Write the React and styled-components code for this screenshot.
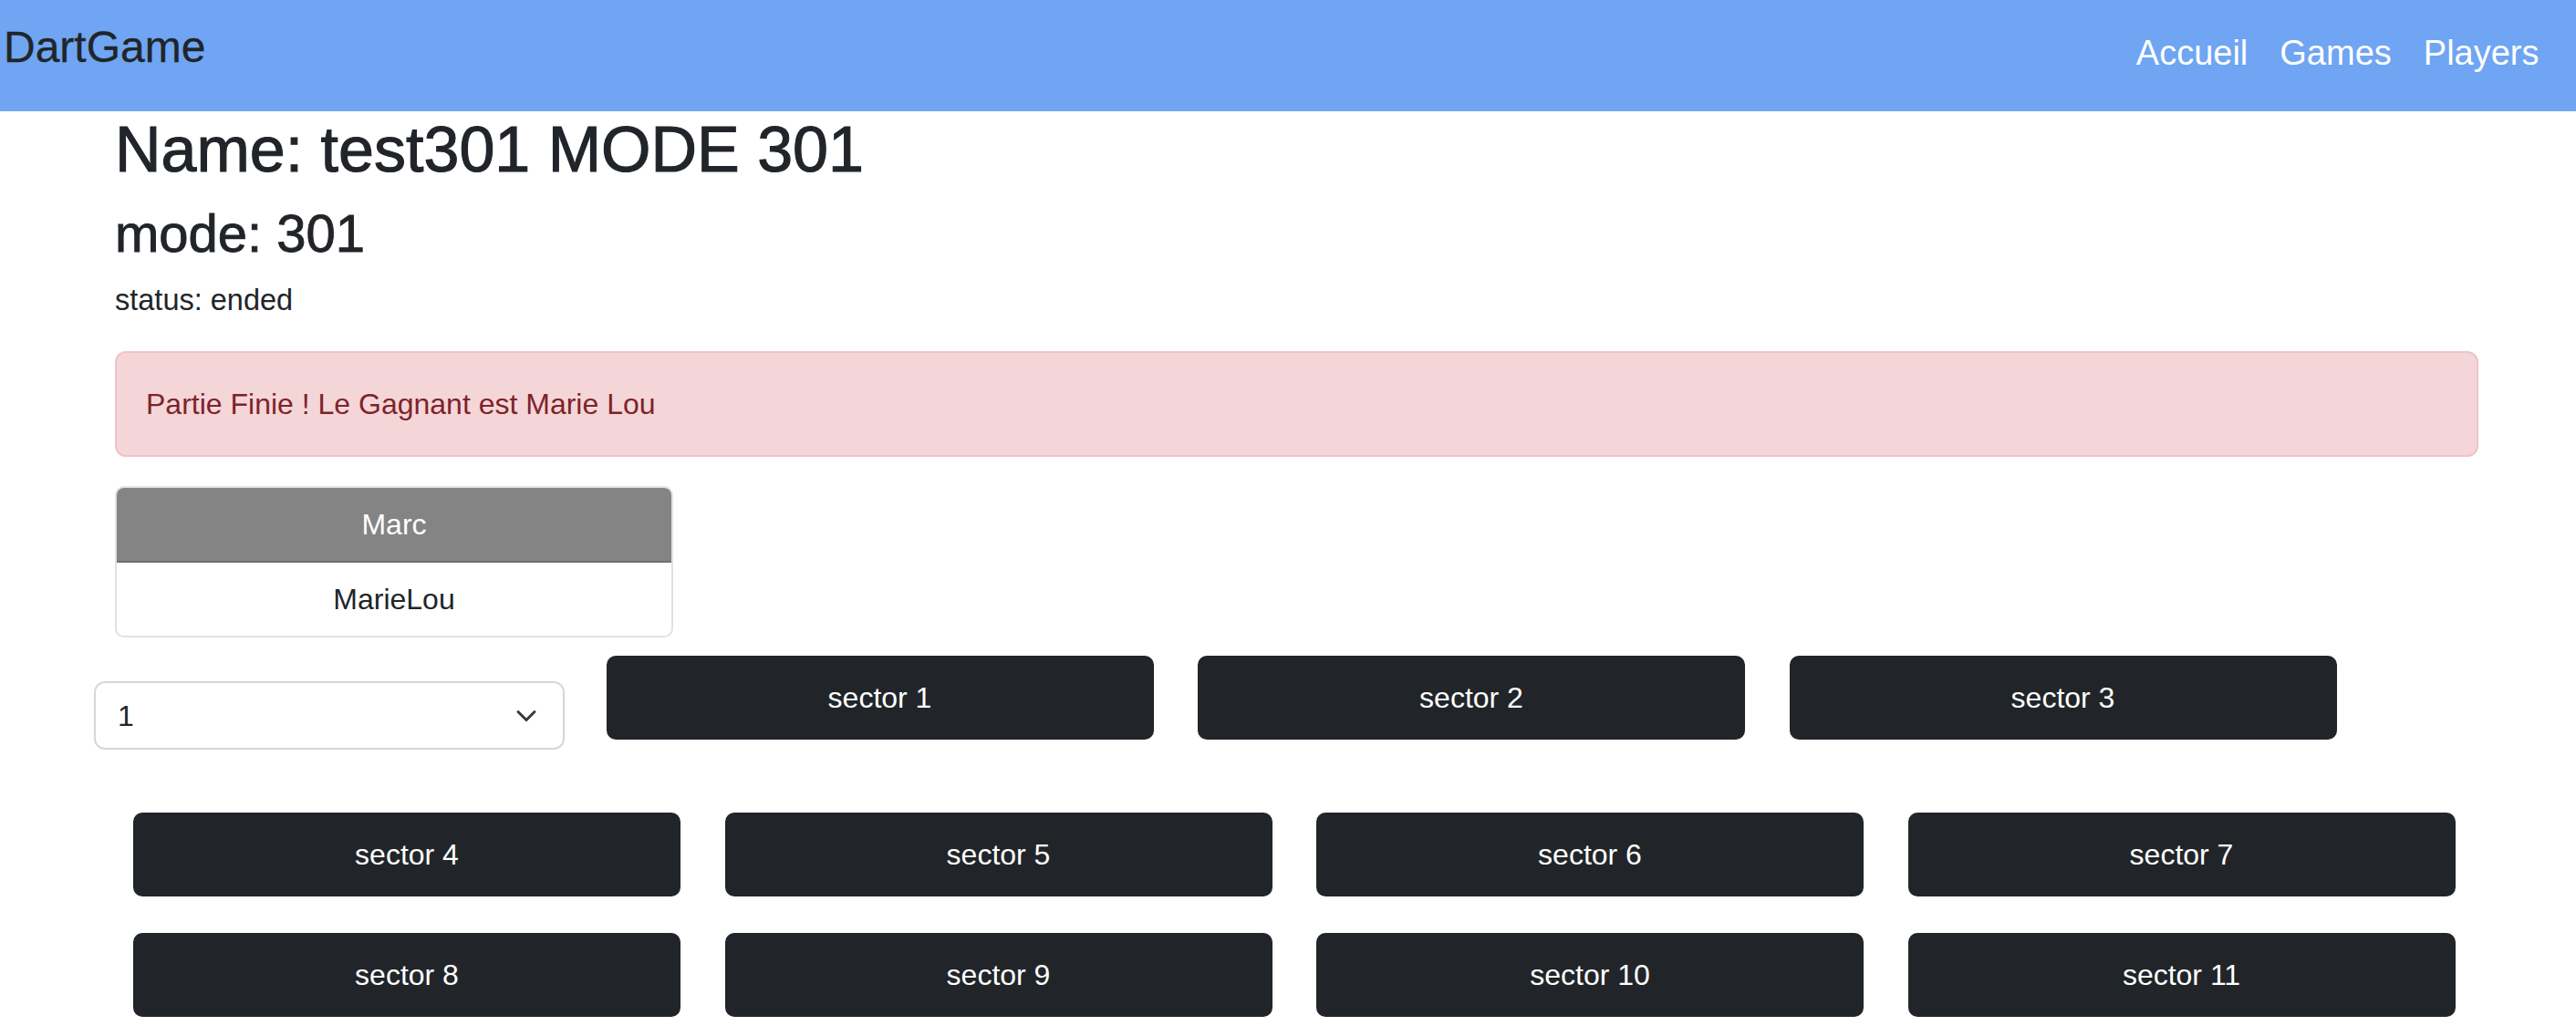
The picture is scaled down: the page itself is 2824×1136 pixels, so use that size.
import React from "react";
import styled, { createGlobalStyle } from "styled-components";

const GlobalStyle = createGlobalStyle`
  * { box-sizing: border-box; }
  html, body { margin: 0; padding: 0; background: #ffffff; }
  body {
    font-family: "Liberation Sans", Arial, sans-serif;
    font-size: 32px;
    line-height: 1.5;
    color: #212529;
  }
`;

const NavBar = styled.nav`
  display: flex;
  justify-content: space-between;
  align-items: flex-start;
  height: 122px;
  padding: 0 23px 0 4px;
  background: #6fa5f2;
`;

const Brand = styled.a`
  margin-top: 16px;
  font-size: 48px;
  line-height: 1.5;
  color: #212529;
  text-decoration: none;
  -webkit-text-stroke: 0.3px #212529;
`;

const NavLinks = styled.div`
  display: flex;
  margin-top: 30px;
`;

const NavLink = styled.a`
  padding: 0 17.5px;
  font-size: 38px;
  line-height: 1.5;
  color: #ffffff;
  text-decoration: none;
`;

const Main = styled.main`
  width: 2717px;
  padding-left: 126px;
`;

const Title = styled.h1`
  margin: 0 0 15px;
  font-size: 70px;
  font-weight: 400;
  line-height: 1.2;
  -webkit-text-stroke: 1.1px #212529;
`;

const SubTitle = styled.h2`
  margin: 0 0 14.5px;
  font-size: 58px;
  font-weight: 400;
  line-height: 1.2;
  -webkit-text-stroke: 0.9px #212529;
`;

const Status = styled.p`
  margin: 0 0 32px;
  font-size: 32.5px;
  line-height: 48px;
`;

const Alert = styled.div`
  margin-bottom: 32px;
  padding: 32px;
  border: 2px solid #f1c3c8;
  border-radius: 12px;
  background: #f4d6d9;
  color: #7f2329;
`;

const PlayerList = styled.div`
  width: 612px;
  margin-bottom: 20px;
  border: 2px solid #dee2e6;
  border-radius: 10px;
  overflow: hidden;
`;

const PlayerRow = styled.div`
  padding: 16px;
  text-align: center;
  background: ${(p) => (p.$active ? "#848484" : "#ffffff")};
  color: ${(p) => (p.$active ? "#ffffff" : "#212529")};
  border-bottom: 2px solid ${(p) => (p.$active ? "#6f6f6f" : "#dee2e6")};
  &:last-child { border-bottom: none; }
`;

const TopRow = styled.div`
  display: grid;
  grid-template-columns: 513px repeat(3, 600px);
  column-gap: 48.5px;
  align-items: start;
  margin-left: -23px;
`;

const SelectBox = styled.div`
  display: flex;
  align-items: center;
  justify-content: space-between;
  height: 75px;
  margin: 28px -3px 0 0;
  padding: 0 28px 0 24px;
  border: 2px solid #d3d8dd;
  border-radius: 12px;
  background: #ffffff;
  color: #212529;
`;

const SectorGrid = styled.div`
  display: grid;
  grid-template-columns: repeat(4, 600px);
  column-gap: 48.5px;
  row-gap: 40px;
  margin: 69px 0 0 20px;
`;

const SectorButton = styled.button`
  height: 92px;
  width: 100%;
  padding: 20px 32px;
  border: 2px solid #212529;
  border-radius: 10px;
  background: #212529;
  color: #ffffff;
  font-family: inherit;
  font-size: 32px;
  line-height: 1.5;
  cursor: pointer;
`;

const Chevron = () => (
  <svg width="24" height="24" viewBox="0 0 16 16" fill="none">
    <path
      d="m2 5 6 6 6-6"
      stroke="#343a40"
      strokeWidth="2"
      strokeLinecap="round"
      strokeLinejoin="round"
    />
  </svg>
);

export default function App() {
  const firstRow = [1, 2, 3];
  const grid = [4, 5, 6, 7, 8, 9, 10, 11];
  return (
    <>
      <GlobalStyle />
      <NavBar>
        <Brand href="#">DartGame</Brand>
        <NavLinks>
          <NavLink href="#">Accueil</NavLink>
          <NavLink href="#">Games</NavLink>
          <NavLink href="#">Players</NavLink>
        </NavLinks>
      </NavBar>
      <Main>
        <Title>Name: test301 MODE 301</Title>
        <SubTitle>mode: 301</SubTitle>
        <Status>status: ended</Status>
        <Alert>Partie Finie ! Le Gagnant est Marie Lou</Alert>
        <PlayerList>
          <PlayerRow $active>Marc</PlayerRow>
          <PlayerRow>MarieLou</PlayerRow>
        </PlayerList>
        <TopRow>
          <SelectBox>
            <span>1</span>
            <Chevron />
          </SelectBox>
          {firstRow.map((n) => (
            <SectorButton key={n}>sector {n}</SectorButton>
          ))}
        </TopRow>
        <SectorGrid>
          {grid.map((n) => (
            <SectorButton key={n}>sector {n}</SectorButton>
          ))}
        </SectorGrid>
      </Main>
    </>
  );
}
